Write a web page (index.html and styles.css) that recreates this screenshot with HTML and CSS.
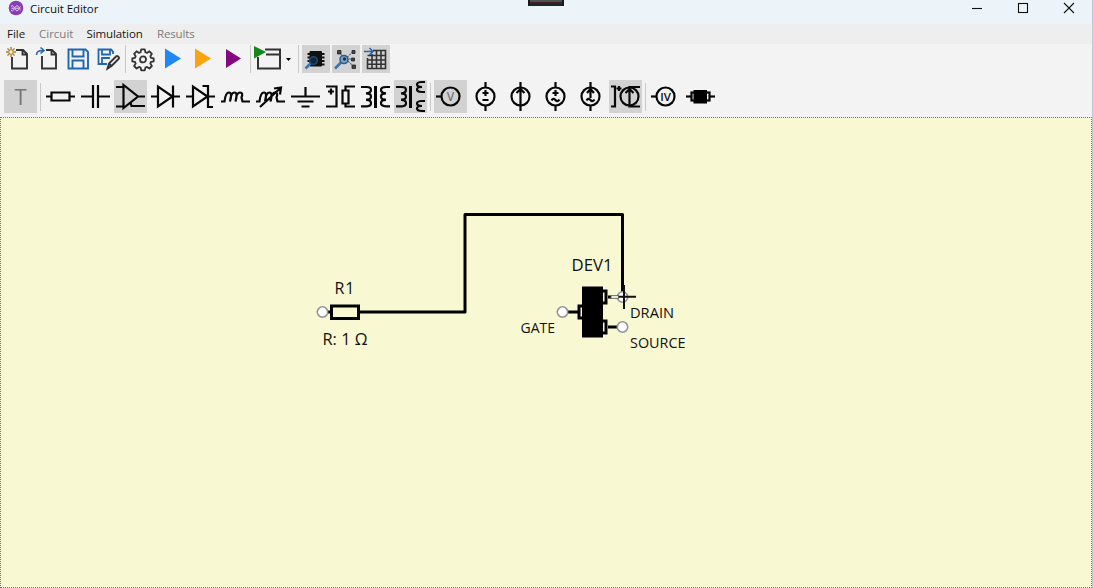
FILE: index.html
```html
<!DOCTYPE html>
<html lang="en">
<head>
<meta charset="utf-8">
<title>Circuit Editor</title>
<link rel="stylesheet" href="styles.css">
</head>
<body>
<div class="window">
  <header class="titlebar">
    <svg class="app-icon" viewBox="0 0 16 16"><circle cx="8" cy="8" r="7.300" fill="#8a3db0"/><path d="M3 6.500q1.200-2 2.400 0t2.400 0t2.400 0t2.400 0M3 10q1.200 2 2.400 0t2.400 0t2.400 0t2.400 0M3.500 8.200h9" fill="none" stroke="#ecd0f5" stroke-width="1"/></svg>
    <h1 class="title">Circuit Editor</h1>
    <div class="recorder"></div>
    <div class="window-controls">
      <svg viewBox="0 0 12 12"><path d="M1 6.500h10"/></svg>
      <svg viewBox="0 0 12 12"><rect x="1.500" y="1.500" width="9" height="9"/></svg>
      <svg viewBox="0 0 12 12"><path d="M1 1l10 10M11 1L1 11"/></svg>
    </div>
  </header>
  <nav class="menu">
    <span class="menu-item file">File</span>
    <span class="menu-item circuit muted">Circuit</span>
    <span class="menu-item simulation">Simulation</span>
    <span class="menu-item results muted">Results</span>
  </nav>
  <div class="toolbar commands">
    <svg class="tool" viewBox="0 0 28 28"><path d="M12 5h7l4 4v14.500H8V12M18.500 5v4.500H23" stroke="#333" stroke-width="1.900"/><path d="M7 2v10M2 7h10M3.500 3.500l7 7M10.500 3.500l-7 7" stroke="#a87d28" stroke-width="1.400"/><circle cx="7" cy="7" r="1.700" fill="#f3f3f3" stroke="none"/></svg>
    <svg class="tool" viewBox="0 0 28 28"><path d="M12 5h6l4 4v14.500H8V11M17.500 5v4.500H22" stroke="#333" stroke-width="1.900"/><path d="M2.500 10q0-5 7-4.500M6.500 2.500l3.500 3-3.500 3" stroke="#2767a8" stroke-width="1.600"/></svg>
    <svg class="tool" viewBox="0 0 28 28"><path d="M4.500 4.500h17l2.500 2.500v16.500H4.500zM8.500 4.500v7h11v-7M8.500 23v-7.500h11V23" stroke="#1f66b3" stroke-width="1.900"/></svg>
    <svg class="tool" viewBox="0 0 28 28"><path d="M13 19H4.500V4.500H17L19 6.500V9M8 4.500v5h8v-5M8 19v-6h8" stroke="#1f66b3" stroke-width="1.800"/><path d="M13.500 23.500l1.500-5 7-7q1-1 2.300.2t.2 2.300l-7 7zM15 18.500l2.500 2.500" stroke="#333" stroke-width="1.900"/></svg>
    <span class="separator"></span>
    <svg class="tool" viewBox="0 0 28 28"><g transform="translate(14 14.200)" stroke="#333" stroke-width="1.800" stroke-linejoin="round"><path d="M-1.800-9.800h3.600l.6 2.800 1.600.7 2.400-1.600 2.500 2.500-1.600 2.400.7 1.600 2.700.6v3l-2.700.5-.7 1.700 1.600 2.400-2.500 2.500-2.400-1.600-1.600.7-.6 2.700h-3.600l-.6-2.700-1.600-.7-2.400 1.600-2.500-2.500 1.600-2.400-.7-1.700-2.700-.5v-3l2.700-.6.7-1.600-1.600-2.400 2.500-2.500 2.400 1.600 1.600-.7z"/><circle cx="0" cy="0.200" r="3"/></g></svg>
    <svg class="tool" viewBox="0 0 28 28"><path d="M6 3.500L22 13.500L6 23.500z" fill="#1e88f7" stroke="none"/></svg>
    <svg class="tool" viewBox="0 0 28 28"><path d="M6 3.500L22 13.500L6 23.500z" fill="#faa411" stroke="none"/></svg>
    <svg class="tool" viewBox="0 0 28 28"><path d="M7 4L22 13.500L7 23z" fill="#84087f" stroke="none"/></svg>
    <span class="separator"></span>
    <div class="split">
      <svg class="tool wide" viewBox="0 0 28 28"><path d="M4 12v11.500H26V4.500H11M12 9.500h14" stroke="#333" stroke-width="2"/><path d="M0 1L12 7L0 13.500z" fill="#16851b" stroke="none"/></svg>
      <span class="arrow"><svg viewBox="0 0 5 3"><path d="M0 0h5L2.500 3z"/></svg></span>
    </div>
    <span class="separator"></span>
    <svg class="tool active" viewBox="0 0 28 28"><rect x="7.500" y="6" width="12.500" height="15.500" rx="1" fill="#111" stroke="none"/><path d="M5.500 9h17M5.500 12.500h17M5.500 16h17M9 19.500h13.500" stroke="#111" stroke-width="1.800"/><path d="M8.500 18.500l-5 5" stroke="#3976b0" stroke-width="2.600"/><circle cx="11.500" cy="15.500" r="3.800" fill="#10263b" stroke="#1f4c75" stroke-width="1.400"/></svg>
    <svg class="tool active" viewBox="0 0 28 28"><path d="M7 7l6 7 8-7M14 14h7M14 14l7 7" stroke="#666" stroke-width="1.100" stroke-dasharray="2 1"/><path d="M5.500 5.500h3.500v3.500h-3.500zM20 5.500h3v3h-3zM19.500 13h3v3h-3zM20 20h3.500v3.500h-3.500z" fill="#444" stroke="#222" stroke-width=".8"/><path d="M9 17.500l-6 6" stroke="#3976b0" stroke-width="2.600"/><circle cx="12" cy="14.500" r="4" fill="#7fa5c4" stroke="#285d8d" stroke-width="1.600"/><circle cx="12.500" cy="14" r="1.700" fill="#234"/></svg>
    <svg class="tool active" viewBox="0 0 28 28"><path d="M11 5.500h12.500v18h-18V13M5.500 10.500h18M5.500 15h18M5.500 19.300h18M10 9v14.500M14.500 5.500v18M19 5.500v18" stroke="#333" stroke-width="1.600"/><path d="M2 6.500h9M7.500 3L11 6.500 7.500 10" stroke="#2367ac" stroke-width="1.500"/></svg>
  </div>
  <div class="toolbar parts">
    <svg class="part active" viewBox="0 0 33 33"><text class="glyph-t" x="16.500" y="25">T</text></svg>
    <span class="separator"></span>
    <svg class="part" viewBox="0 0 33 33"><path d="M2 16.500h6M25 16.500h6M7.500 12.500h18v8h-18z"/></svg>
    <svg class="part" viewBox="0 0 33 33"><path d="M2 16.500h12M19 16.500h12M14 5v23M19 5v23"/></svg>
    <svg class="part active" viewBox="0 0 33 33"><path d="M9.500 5v23L24 16.500zM2 7h7.500M2 26.500h7.500M24 16.500h7M31 26H17.500l-1-3.500"/></svg>
    <svg class="part" viewBox="0 0 33 33"><path d="M2 16.500h7M24 16.500h7M9 6.500v20L23.500 16.500zM24 5.500v22"/></svg>
    <svg class="part" viewBox="0 0 33 33"><path d="M2 16.500h7M24 16.500h7M9 6.500v20L23.500 16.500zM18.500 6H24v21h5"/></svg>
    <svg class="part" viewBox="0 0 33 33"><path d="M2 21.500h3.500q1-9 4.500-9t1 9q1-9 4.500-9t1 9q1-9 4.500-9t1.500 5l1 4H31"/></svg>
    <svg class="part" viewBox="0 0 33 33"><path d="M2 21.500h3.500q1-9 4.500-9t1 9q1-9 4.500-9t1 9q1-9 4.500-9t1.500 5l1 4H31M6 27L26.500 8M20 8.500l7-1-1 7"/></svg>
    <svg class="part" viewBox="0 0 33 33"><path d="M16.500 7v9.500M2 16.500h29M8.500 21.500h16M12.500 26.500h8"/></svg>
    <svg class="part" viewBox="0 0 33 33"><path d="M2 6.500h10.500v20H2M4 11.500h6M7 8.500v6M18.500 10.500h6v13h-6zM31 6.500h-9.500v4M21.500 23.500v3H31"/></svg>
    <svg class="part" viewBox="0 0 33 33"><path d="M2 7h6q4 0 4 3t-5 3.300q5 0 5 3.300t-5 3.200q5 0 5 3.200t-4 3.300H2M31 7h-4q-5 0-5 3t5 3.300q-5 0-5 3.300t5 3.200q-5 0-5 3.200t5 3.300h4"/><path d="M16.500 6v22" stroke-width="3"/></svg>
    <svg class="part active" viewBox="0 0 33 33"><path d="M2 7h6q4 0 4 3t-5 3.300q5 0 5 3.300t-5 3.200q5 0 5 3.200t-4 3.300H2M31 2h-3q-5 0-5 2.500t5 2.500q-5 0-5 2.500t5 2.500h3M31 21h-3q-5 0-5 2.500t5 2.500q-5 0-5 2.500t5 2.500h3"/><path d="M16.500 6v22" stroke-width="3"/></svg>
    <span class="separator"></span>
    <svg class="part active" viewBox="0 0 33 33"><circle cx="16.500" cy="16.500" r="9"/><path d="M2 16.500h5.500"/><text class="glyph-v" x="16.500" y="20.700">V</text></svg>
    <svg class="part" viewBox="0 0 33 33"><circle cx="16.500" cy="16.500" r="9"/><path d="M16.500 2v5.500M16.500 25.500V31M13.500 13h6M16.500 10v6M13.500 20h6"/></svg>
    <svg class="part" viewBox="0 0 33 33"><circle cx="16.500" cy="16.500" r="9"/><path d="M16.500 2v29M12.500 13l4-4 4 4"/></svg>
    <svg class="part" viewBox="0 0 33 33"><circle cx="16.500" cy="16.500" r="9"/><path d="M16.500 2v5.500M16.500 25.500V31M13.500 13h6M16.500 10v6M12.500 20.500q2-3 4-.5t4-.5"/></svg>
    <svg class="part" viewBox="0 0 33 33"><circle cx="16.500" cy="16.500" r="9"/><path d="M16.500 2v5.500M16.500 9v9M16.500 25.500V31M13 13l3.500-4 3.500 4M12.500 20.500q2-3 4-.5t4-.5"/></svg>
    <svg class="part active" viewBox="0 0 33 33"><circle cx="20.500" cy="16.500" r="9"/><path d="M2 6.500h4v20H2M7.500 8.500h5M10 6v5M31 7H20.500v19.500H31M16.500 13l4-4 4 4"/></svg>
    <span class="separator"></span>
    <svg class="part" viewBox="0 0 33 33"><circle cx="16.500" cy="16.500" r="9"/><path d="M2 16.500h5.500"/><text class="glyph-iv" x="16.700" y="20.700">IV</text></svg>
    <svg class="part" viewBox="0 0 33 33"><path d="M2 16.500h29"/><rect x="7.500" y="12.500" width="18" height="8" fill="#f3f3f3"/><rect x="9.500" y="10" width="13.500" height="13.500" fill="#000" stroke="none"/></svg>
  </div>
  <main class="canvas">
    <svg class="schematic" viewBox="1 118 1090 469">
      <path class="wire" d="M360 312H465V214.500H622.500V292"/>
      <path class="lead" d="M327 312h4M567 312h11M608 327h10M608 297h3"/>
      <rect class="pad" x="331.500" y="306" width="27" height="12.500"/>
      <rect class="pad" x="579" y="306" width="5" height="12"/>
      <rect class="pad" x="601" y="291" width="5" height="12"/>
      <rect class="pad" x="601" y="321" width="5" height="12"/>
      <rect x="582" y="286.500" width="21" height="51"/>
      <circle class="terminal" cx="322.500" cy="312" r="5.200"/>
      <circle class="terminal" cx="562.500" cy="312" r="5.200"/>
      <circle class="terminal" cx="622.500" cy="297" r="5.200"/>
      <circle class="terminal" cx="622.500" cy="327" r="5.200"/>
      <path class="cursor" d="M618 296.800h18M624 285v24"/>
      <rect x="611" y="295.700" width="7.500" height="2.600" fill="#fff" stroke="#555" stroke-width=".9"/>
      <text class="name" x="334.500" y="293.500" textLength="20">R1</text>
      <text class="name" x="322.500" y="345" textLength="45" lengthAdjust="spacingAndGlyphs">R: 1 Ω</text>
      <text class="name" x="571.500" y="270.500" textLength="41" lengthAdjust="spacingAndGlyphs">DEV1</text>
      <text class="pin" x="520.500" y="333" textLength="34.500" lengthAdjust="spacingAndGlyphs">GATE</text>
      <text class="pin" x="630" y="318" textLength="44" lengthAdjust="spacingAndGlyphs">DRAIN</text>
      <text class="pin" x="630" y="348" textLength="55.500" lengthAdjust="spacingAndGlyphs">SOURCE</text>
    </svg>
  </main>
</div>
</body>
</html>
```

FILE: styles.css
```css
* { box-sizing: border-box; }
body { margin: 0; font-family: "Open Sans", "Noto Sans", sans-serif; }
svg { display: block; flex: none; }
.window {
  width: 1093px; height: 588px; overflow: hidden;
  display: flex; flex-direction: column;
  background: #f3f3f3; border-right: 1px solid #bccbdc;
}
.titlebar {
  position: relative; height: 24px; flex: none;
  display: flex; align-items: flex-start;
  padding-left: 8px; background: #edf4f9;
}
.app-icon { width: 16px; height: 16px; }
.title { margin: 0 0 0 6px; font-size: 11.5px; font-weight: 400; line-height: 18px; letter-spacing: -.08px; color: #111; }
.recorder { position: absolute; left: 528px; top: 0; width: 36px; height: 6px; background: #4a5553; border: 2px solid #151b1d; border-top: 0; border-bottom-color: #102b2b; box-shadow: inset 0 -2px #4a1a20; }
.window-controls { margin-left: auto; display: flex; gap: 34px; padding: 2px 17px 0 0; }
.window-controls svg { width: 12px; height: 12px; fill: none; stroke: #111; stroke-width: 1.1; }
.menu { height: 20px; flex: none; display: flex; padding-left: 7px; background: #eee; font-size: 11.5px; line-height: 20px; color: #151515; white-space: nowrap; }
.muted { color: #7c7c7c; }
.file { width: 32px; }
.circuit { width: 47.5px; }
.simulation { width: 70.5px; letter-spacing: -.1px; }
.results { letter-spacing: -.15px; }
.toolbar { flex: none; display: flex; gap: 2px; padding-left: 4px; align-items: center; }
.commands { height: 30px; }
.parts { height: 43px; padding-top: 2px; }
.tool { width: 28px; height: 28px; fill: none; }
.part { width: 33px; height: 33px; fill: none; stroke: #080808; stroke-width: 2.2; }
.part text { stroke: none; text-anchor: middle; }
.glyph-t { font-size: 22px; fill: #777; }
.glyph-v { font-size: 12px; font-weight: 600; fill: #777; }
.glyph-iv { font-size: 11.5px; font-weight: 600; fill: #111; }
.active { background: #d2d2d2; }
.separator { width: 3px; height: 28px; flex: none; border-right: 1px solid #c8c8c8; margin-right: 1px; margin-left: -1px; }
.split { display: flex; width: 41px; }
.arrow { display: flex; align-items: center; justify-content: center; width: 14px; }
.arrow svg { width: 5px; height: 3px; }
.canvas { flex: 1; min-height: 0; background: #f8f8d2; border: 1px dotted #77776a; }
.schematic { width: 1090px; height: 469px; }
.wire, .lead { fill: none; stroke: #000; stroke-width: 3; stroke-linejoin: round; }
.pad { fill: #f8f8d2; stroke: #000; stroke-width: 3; }
.terminal { fill: #fff; stroke: #96949a; stroke-width: 1.6; }
.cursor { stroke: #111; stroke-width: 2; }
.name { font-size: 16px; fill: #111; }
.pin { font-size: 14px; fill: #111; }
```
